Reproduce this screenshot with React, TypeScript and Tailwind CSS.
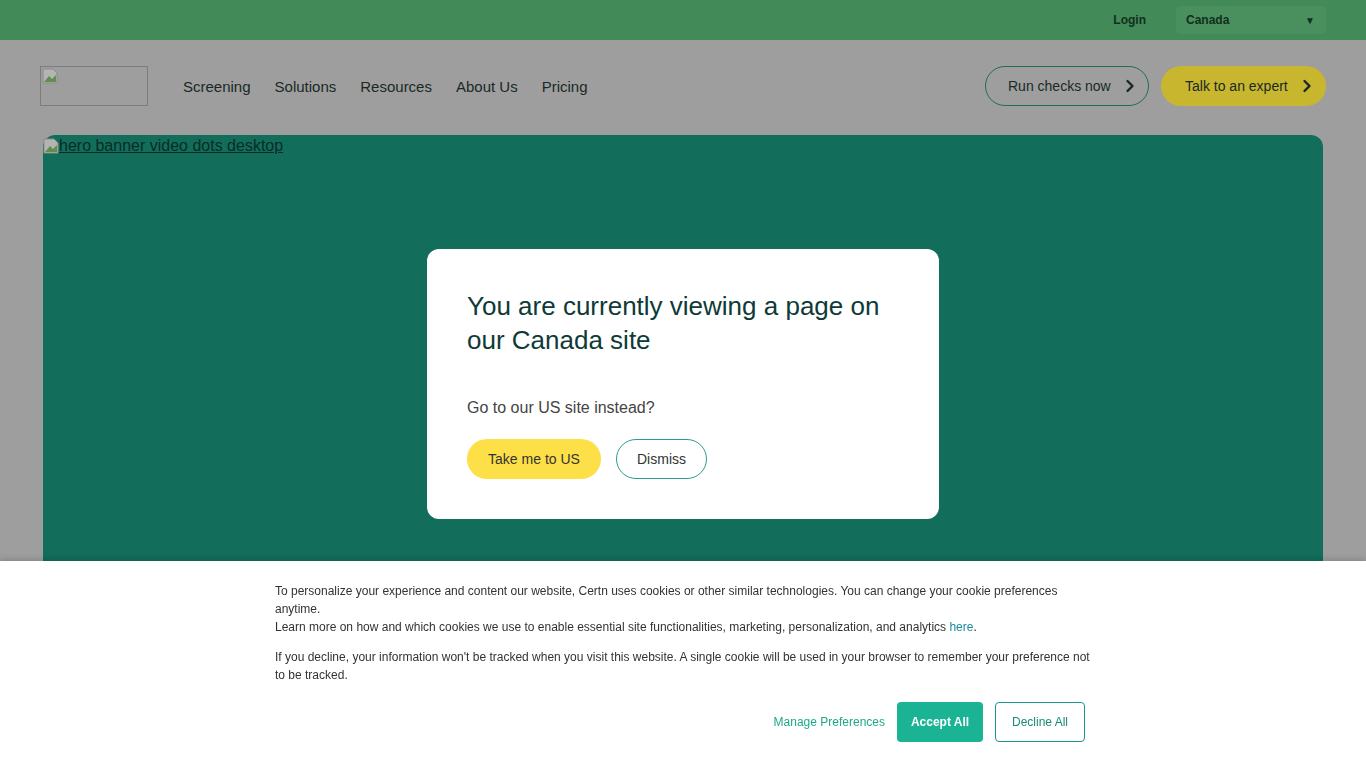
import React from "react";

const font = { fontFamily: '"Liberation Sans", Arial, sans-serif' };

function Chevron() {
  return (
    <svg width="10" height="14" viewBox="0 0 10 14" className="ml-[14px]">
      <path d="M2.5 2 L7.5 7 L2.5 12" fill="none" stroke="currentColor" strokeWidth="2.4" strokeLinecap="round" strokeLinejoin="round" />
    </svg>
  );
}

function BrokenImg() {
  return (
    <svg width="16" height="16" viewBox="0 0 16 16" className="shrink-0">
      <path d="M1 1 H11 L15 5 V15 H1 Z" fill="#b4b4b4" stroke="#8c8c8c" strokeWidth="1" />
      <path d="M2 14 L7 8 L10 11 L14 7 V14 Z" fill="#5f8f4e" />
    </svg>
  );
}

export default function App() {
  return (
    <div className="min-h-screen bg-[#9e9e9e] text-[#1d2a27]" style={font}>
      {/* top bar */}
      <div className="h-10 bg-[#428a58] flex items-center justify-end pr-10">
        <a className="text-[12px] font-bold text-[#10301d] mr-[30px]">Login</a>
        <div className="w-[150px] h-7 bg-[#4a8f5e] rounded-sm flex items-center justify-between pl-[10px] pr-[11px]">
          <span className="text-[12px] font-bold text-[#10301d]">Canada</span>
          <span className="text-[10px] text-[#10301d]">▼</span>
        </div>
      </div>

      {/* header */}
      <header className="h-[95px] pt-[26px] px-10">
        <div className="h-10 flex items-center justify-between">
          <div className="flex items-center">
            <div className="w-[108px] h-10 border border-[#7d7d7d] pl-[1px] pt-[1px]">
              <BrokenImg />
            </div>
            <nav className="flex items-center gap-6 ml-[35px] text-[15px] text-[#1a2926] pt-[2px]">
              <span>Screening</span>
              <span>Solutions</span>
              <span>Resources</span>
              <span>About Us</span>
              <span>Pricing</span>
            </nav>
          </div>
          <div className="flex items-center gap-3">
            <button className="h-10 w-[164px] rounded-full border border-[#1f6b5c] flex items-center pl-[22px] text-[14px] text-[#1a2926]">
              Run checks now
              <Chevron />
            </button>
            <button className="h-10 w-[165px] rounded-full bg-[#c8b62f] flex items-center pl-6 text-[14px] text-[#1a2926]">
              Talk to an expert
              <Chevron />
            </button>
          </div>
        </div>
      </header>

      {/* hero */}
      <section className="mx-[43px] h-[620px] rounded-xl bg-[#126e5a] pt-px">
        <a className="flex items-center text-[16px] leading-5 text-[#0b2b27] underline">
          <BrokenImg />
          hero banner video dots desktop
        </a>
      </section>

      {/* modal */}
      <div className="fixed inset-0 flex items-center justify-center">
        <div className="w-[512px] h-[270px] bg-white rounded-xl px-10 pt-10">
          <h2 className="text-[26px] leading-[34px] text-[#0e3a37]">
            You are currently viewing a page on our Canada site
          </h2>
          <p className="mt-[39px] text-[16px] text-[#444]">Go to our US site instead?</p>
          <div className="flex gap-[15px] mt-[19px]">
            <button className="h-10 w-[134px] rounded-full bg-[#fde047] text-[14px] text-[#333]">
              Take me to US
            </button>
            <button className="h-10 w-[91px] rounded-full border border-[#2a9d8f] text-[14px] text-[#333]">
              Dismiss
            </button>
          </div>
        </div>
      </div>

      {/* cookie banner */}
      <div className="fixed left-0 right-0 bottom-0 h-[207px] bg-white shadow-[0_-2px_6px_rgba(0,0,0,0.15)]">
        <div className="w-[816px] mx-auto pt-[21px] text-[12px] leading-[18px] text-[#333]">
          <p>
            To personalize your experience and content our website, Certn uses cookies or other similar technologies. You can change your cookie preferences anytime.
            <br />
            Learn more on how and which cookies we use to enable essential site functionalities, marketing, personalization, and analytics{" "}
            <a className="text-[#1a8a9a]">here</a>.
          </p>
          <p className="mt-3">
            If you decline, your information won't be tracked when you visit this website. A single cookie will be used in your browser to remember your preference not to be tracked.
          </p>
          <div className="flex items-center justify-end gap-3 mt-[18px] pr-[6px]">
            <button className="text-[#1fa88a] text-[12px]">Manage Preferences</button>
            <button className="h-10 w-[86px] rounded bg-[#1ab394] text-white text-[12px] font-semibold">
              Accept All
            </button>
            <button className="h-10 w-[90px] rounded border border-[#1a9a8a] text-[#1a8a7a] text-[12px]">
              Decline All
            </button>
          </div>
        </div>
      </div>
    </div>
  );
}
